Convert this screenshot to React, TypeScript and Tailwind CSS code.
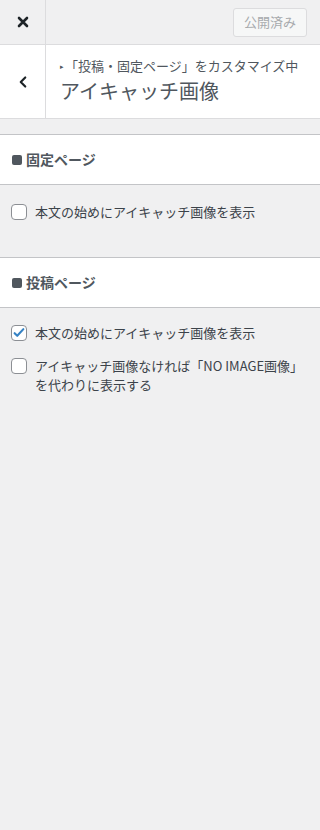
import React, { useState } from 'react';

const font = { fontFamily: '"Noto Sans CJK JP", "Noto Sans", sans-serif' };

interface CheckRowProps {
  label: React.ReactNode;
  checked: boolean;
  onChange: () => void;
}

const CheckRow: React.FC<CheckRowProps> = ({ label, checked, onChange }) => (
  <label className="flex items-start gap-[8px] cursor-pointer">
    <span
      onClick={onChange}
      className="mt-[2px] w-[16px] h-[16px] shrink-0 rounded-[4px] border border-[#8c8f94] bg-white flex items-center justify-center"
    >
      {checked && (
        <svg viewBox="0 0 16 16" className="w-[14px] h-[14px]">
          <path d="M3 8.2l3 3 7-7.6" stroke="#3582c4" strokeWidth="2.4" fill="none" strokeLinecap="round" strokeLinejoin="round" />
        </svg>
      )}
    </span>
    <span className="text-[13px] leading-[19px] text-[#3c434a]">{label}</span>
  </label>
);

const SectionHeader: React.FC<{ title: string }> = ({ title }) => (
  <div className="bg-white border-y border-[#c3c4c7] h-[51px] flex items-center px-[12px] gap-[4px]">
    <span className="w-[10px] h-[10px] rounded-[2px] bg-[#50575e]" />
    <span className="text-[14px] font-bold text-[#50575e]">{title}</span>
  </div>
);

export default function App() {
  const [page1, setPage1] = useState(false);
  const [post1, setPost1] = useState(true);
  const [post2, setPost2] = useState(false);

  return (
    <div style={font} className="w-[320px] h-[830px] bg-[#f0f0f1] flex flex-col">
      <div className="h-[45px] flex border-b border-[#dcdcde] bg-[#f0f0f1]">
        <button className="w-[46px] h-full border-r border-[#dcdcde] flex items-center justify-center">
          <svg viewBox="0 0 20 20" className="w-[20px] h-[20px]">
            <path d="M6 6l8 8M14 6l-8 8" stroke="#1d2327" strokeWidth="2.6" strokeLinecap="round" />
          </svg>
        </button>
        <div className="flex-1 flex items-center justify-end pr-[13px]">
          <span className="h-[29px] px-[10px] flex items-center rounded-[3px] border border-[#dcdcde] bg-[#f6f7f7] text-[13px] text-[#a7aaad]">
            公開済み
          </span>
        </div>
      </div>

      <div className="h-[74px] flex bg-white border-b border-[#dcdcde]">
        <button className="w-[46px] h-full border-r border-[#dcdcde] flex items-center justify-center">
          <svg viewBox="0 0 20 20" className="w-[18px] h-[18px]">
            <path d="M12.5 5l-5 5 5 5" stroke="#1d2327" strokeWidth="2.4" fill="none" strokeLinecap="round" strokeLinejoin="round" />
          </svg>
        </button>
        <div className="flex-1 pl-[14px] pt-[12px]">
          <div className="text-[13px] leading-[18px] text-[#50575e] flex items-center">
            <span className="text-[7px] mr-[1px]">▸</span>「投稿・固定ページ」をカスタマイズ中
          </div>
          <div className="text-[20px] leading-[28px] text-[#50575e] mt-[2px]">アイキャッチ画像</div>
        </div>
      </div>

      <div className="h-[15px]" />
      <SectionHeader title="固定ページ" />
      <div className="px-[11px] pt-[17px] pb-[36px]">
        <CheckRow label="本文の始めにアイキャッチ画像を表示" checked={page1} onChange={() => setPage1(!page1)} />
      </div>

      <SectionHeader title="投稿ページ" />
      <div className="px-[11px] pt-[15px] flex flex-col gap-[14px]">
        <CheckRow label="本文の始めにアイキャッチ画像を表示" checked={post1} onChange={() => setPost1(!post1)} />
        <CheckRow
          label={<>アイキャッチ画像なければ「NO IMAGE画像」<br />を代わりに表示する</>}
          checked={post2}
          onChange={() => setPost2(!post2)}
        />
      </div>
    </div>
  );
}
